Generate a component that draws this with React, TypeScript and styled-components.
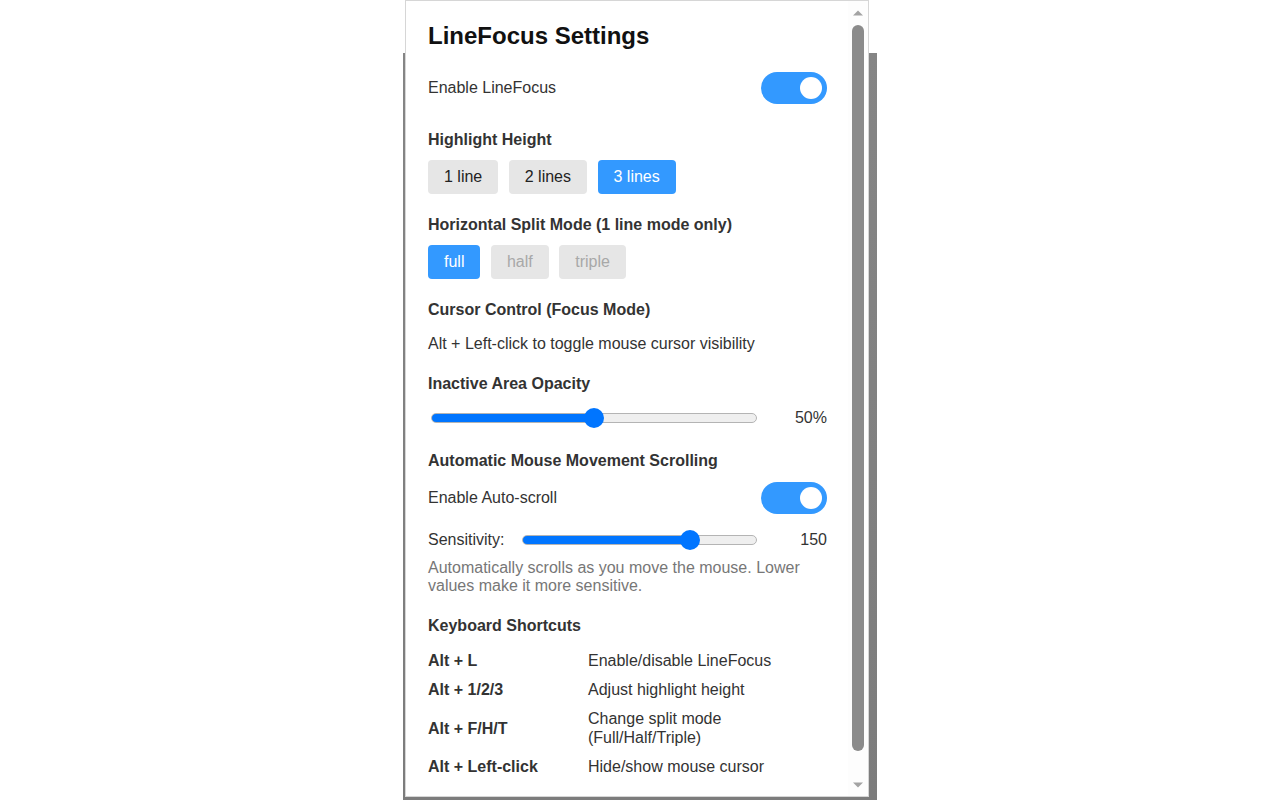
import React from "react";
import styled, { createGlobalStyle } from "styled-components";

const GlobalStyle = createGlobalStyle`
  html, body {
    margin: 0;
    padding: 0;
    background: #ffffff;
    font-family: "Liberation Sans", Arial, sans-serif;
  }
  * {
    box-sizing: border-box;
  }
`;

// page behind the popup, only a thin strip of it is visible
const Backdrop = styled.div`
  width: 474px;
  height: 800px;
  margin: 0 auto;
  background: linear-gradient(180deg, #ffffff 0, #ffffff 53px, #858585 53px, #7c7c7c 100%);
`;

const Popup = styled.div`
  margin-left: 2px;
  width: 464px;
  height: 797px;
  border: 1px solid #d6d6d6;
  background: #ffffff;
  display: flex;
  overflow: hidden;
`;

const Content = styled.div`
  flex: 1;
  min-width: 0;
  padding: 21px 21px 40px 22px;
  color: #333333;
  font-size: 16px;
  line-height: 20px;
`;

const Title = styled.h1`
  margin: 0 0 22px;
  font-size: 24px;
  line-height: 28px;
  font-weight: 700;
  color: #111111;
`;

const Row = styled.div<{ $mb?: number }>`
  display: flex;
  align-items: center;
  justify-content: space-between;
  margin-bottom: ${(p) => p.$mb ?? 0}px;
`;

const Label = styled.span`
  color: #333333;
`;

const SectionTitle = styled.div<{ $mb?: number }>`
  font-weight: 700;
  color: #333333;
  margin-bottom: ${(p) => p.$mb ?? 10}px;
`;

const Section = styled.div<{ $mb?: number }>`
  margin-bottom: ${(p) => p.$mb ?? 20}px;
`;

const Toggle = styled.div<{ $on: boolean }>`
  width: 66px;
  height: 32px;
  border-radius: 16px;
  background: ${(p) => (p.$on ? "#3399ff" : "#cccccc")};
  display: flex;
  align-items: center;
  justify-content: ${(p) => (p.$on ? "flex-end" : "flex-start")};
  padding: 0 5px;
  cursor: pointer;
`;

const Knob = styled.div`
  width: 22px;
  height: 22px;
  border-radius: 50%;
  background: #ffffff;
`;

const ButtonGroup = styled.div`
  display: flex;
  gap: 10.5px;
`;

const OptionButton = styled.button<{ $active?: boolean }>`
  font-family: inherit;
  font-size: 16px;
  line-height: 18px;
  height: 34px;
  padding: 0 16px;
  border: none;
  border-radius: 4px;
  background: ${(p) => (p.$active ? "#3399ff" : "#e6e6e6")};
  color: ${(p) => (p.$active ? "#ffffff" : "#222222")};
  cursor: pointer;

  &:disabled {
    color: #a8a8a8;
    cursor: default;
  }
`;

const Text = styled.div`
  color: #333333;
`;

const SliderRow = styled.div`
  display: flex;
  align-items: center;
  height: 20px;
`;

const SliderLabel = styled.span`
  color: #333333;
  margin-right: 18px;
`;

const Range = styled.input<{ $pct: number; $ml?: number }>`
  -webkit-appearance: none;
  appearance: none;
  flex: 1;
  min-width: 0;
  height: 20px;
  margin: 0 0 0 ${(p) => p.$ml ?? 0}px;
  padding: 0;
  background: transparent;

  &::-webkit-slider-runnable-track {
    height: 10px;
    border-radius: 5px;
    border: 1px solid #b4b4b4;
    background: linear-gradient(
      90deg,
      #0075ff 0,
      #0075ff ${(p) => p.$pct}%,
      #efefef ${(p) => p.$pct}%,
      #efefef 100%
    );
  }

  &::-webkit-slider-thumb {
    -webkit-appearance: none;
    width: 20px;
    height: 20px;
    margin-top: -6px;
    border-radius: 50%;
    border: none;
    background: #0075ff;
  }
`;

const SliderValue = styled.span`
  width: 60px;
  margin-left: 10px;
  text-align: right;
  color: #333333;
`;

const Hint = styled.div`
  margin-top: 9px;
  color: #777777;
  line-height: 18px;
`;

const Shortcuts = styled.div`
  display: grid;
  grid-template-columns: 160px 1fr;
  line-height: 19px;
  margin-top: -5.5px;
`;

const Keys = styled.div`
  font-weight: 700;
  color: #333333;
  padding: 5px 0;
  display: flex;
  align-items: center;
`;

const Action = styled.div`
  color: #333333;
  padding: 5px 0;
`;

// fake scroll rail drawn next to the content
const Rail = styled.div`
  width: 20px;
  flex: none;
  display: flex;
  flex-direction: column;
  background: #fdfdfd;
`;

const Arrow = styled.div<{ $h: number }>`
  height: ${(p) => p.$h}px;
  display: flex;
  align-items: center;
  justify-content: center;
`;

const Track = styled.div`
  flex: 1;
  padding: 1px 4px 0;
`;

const Thumb = styled.div`
  height: 726px;
  border-radius: 6px;
  background: #8b8b8b;
`;

const Triangle = ({ up }: { up?: boolean }) => (
  <svg width="10" height="6" viewBox="0 0 10 6">
    {up ? <polygon points="5,0.5 10,5.5 0,5.5" fill="#a3a3a3" /> : <polygon points="0,0.5 10,0.5 5,5.5" fill="#a3a3a3" />}
  </svg>
);

const shortcuts: [string, string][] = [
  ["Alt + L", "Enable/disable LineFocus"],
  ["Alt + 1/2/3", "Adjust highlight height"],
  ["Alt + F/H/T", "Change split mode (Full/Half/Triple)"],
  ["Alt + Left-click", "Hide/show mouse cursor"],
];

export default function App() {
  const [enabled, setEnabled] = React.useState(true);
  const [autoScroll, setAutoScroll] = React.useState(true);
  const [lines, setLines] = React.useState(3);
  const [opacity, setOpacity] = React.useState(50);
  const [sensitivity, setSensitivity] = React.useState(150);

  const sensPct = ((sensitivity - 10) / 190) * 100;

  return (
    <>
      <GlobalStyle />
      <Backdrop>
        <Popup>
          <Content>
            <Title>LineFocus Settings</Title>

            <Row $mb={26}>
              <Label>Enable LineFocus</Label>
              <Toggle $on={enabled} onClick={() => setEnabled(!enabled)}>
                <Knob />
              </Toggle>
            </Row>

            <Section $mb={21}>
              <SectionTitle>Highlight Height</SectionTitle>
              <ButtonGroup>
                {[1, 2, 3].map((n) => (
                  <OptionButton key={n} $active={lines === n} onClick={() => setLines(n)}>
                    {n === 1 ? "1 line" : `${n} lines`}
                  </OptionButton>
                ))}
              </ButtonGroup>
            </Section>

            <Section $mb={21}>
              <SectionTitle>Horizontal Split Mode (1 line mode only)</SectionTitle>
              <ButtonGroup>
                <OptionButton $active>full</OptionButton>
                <OptionButton disabled>half</OptionButton>
                <OptionButton disabled>triple</OptionButton>
              </ButtonGroup>
            </Section>

            <Section>
              <SectionTitle $mb={14}>Cursor Control (Focus Mode)</SectionTitle>
              <Text>Alt + Left-click to toggle mouse cursor visibility</Text>
            </Section>

            <Section $mb={23}>
              <SectionTitle $mb={14}>Inactive Area Opacity</SectionTitle>
              <SliderRow>
                <Range
                  type="range"
                  min={0}
                  max={100}
                  value={opacity}
                  $pct={opacity}
                  $ml={3}
                  onChange={(e) => setOpacity(Number(e.target.value))}
                />
                <SliderValue>{opacity}%</SliderValue>
              </SliderRow>
            </Section>

            <Section $mb={21}>
              <SectionTitle $mb={10.5}>Automatic Mouse Movement Scrolling</SectionTitle>
              <Row $mb={16.5}>
                <Label>Enable Auto-scroll</Label>
                <Toggle $on={autoScroll} onClick={() => setAutoScroll(!autoScroll)}>
                  <Knob />
                </Toggle>
              </Row>
              <SliderRow>
                <SliderLabel>Sensitivity:</SliderLabel>
                <Range
                  type="range"
                  min={10}
                  max={200}
                  value={sensitivity}
                  $pct={sensPct}
                  onChange={(e) => setSensitivity(Number(e.target.value))}
                />
                <SliderValue>{sensitivity}</SliderValue>
              </SliderRow>
              <Hint>Automatically scrolls as you move the mouse. Lower values make it more sensitive.</Hint>
            </Section>

            <Section $mb={0}>
              <SectionTitle $mb={15.5}>Keyboard Shortcuts</SectionTitle>
              <Shortcuts>
                {shortcuts.map(([k, a]) => (
                  <React.Fragment key={k}>
                    <Keys>{k}</Keys>
                    <Action>{a}</Action>
                  </React.Fragment>
                ))}
              </Shortcuts>
            </Section>
          </Content>

          <Rail>
            <Arrow $h={23}>
              <Triangle up />
            </Arrow>
            <Track>
              <Thumb />
            </Track>
            <Arrow $h={22}>
              <Triangle />
            </Arrow>
          </Rail>
        </Popup>
      </Backdrop>
    </>
  );
}
